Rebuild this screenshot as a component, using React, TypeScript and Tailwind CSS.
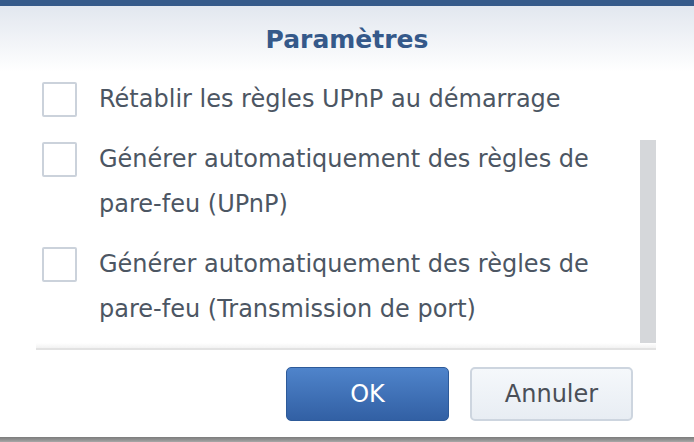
const items = [
  ["Rétablir les règles UPnP au démarrage"],
  ["Générer automatiquement des règles de", "pare-feu (UPnP)"],
  ["Générer automatiquement des règles de", "pare-feu (Transmission de port)"],
];

export default function App() {
  return (
    <div className="w-[694px] h-[442px] bg-white flex flex-col overflow-hidden font-['DejaVu_Sans',Verdana,sans-serif]">
      <div className="h-[6px] bg-[#365a8a]" />
      <div className="h-[66px] flex items-center justify-center bg-gradient-to-b from-[#e2e7ef] to-white">
        <h1 className="text-[25px] font-bold text-[#35598a] leading-none">Paramètres</h1>
      </div>

      <div className="h-[271px] flex pl-[36px] pr-[38px]">
        <div className="flex-1 flex flex-col gap-[15px] pt-[5px] pl-[6px]">
          {items.map((lines, i) => (
            <label key={i} className="flex items-start gap-[22px]">
              <span className="mt-[5px] w-[35px] h-[35px] shrink-0 border-2 border-[#cbd2db] rounded-[2px] bg-white" />
              <span className="text-[24px] leading-[45px] text-[#4c5663]">
                {lines.map((l, j) => (
                  <span key={j} className="block whitespace-nowrap">
                    {l}
                  </span>
                ))}
              </span>
            </label>
          ))}
        </div>
        <div className="w-[16px] pt-[68px]">
          <div className="h-full bg-[#d5d7da]" />
        </div>
      </div>

      <div className="mx-[36px] mr-[38px]">
        <div className="h-[5px] bg-gradient-to-b from-white to-[#f2f2f2]" />
        <div className="h-[2px] bg-[#e2e2e2]" />
      </div>

      <div className="flex-1 flex justify-end items-start gap-[21px] pt-[17px] pr-[61px]">
        <button className="w-[163px] h-[54px] rounded-[5px] border border-[#2d5a99] bg-gradient-to-b from-[#4f84cb] to-[#3260a4] text-white text-[24px]">
          OK
        </button>
        <button className="w-[163px] h-[54px] rounded-[5px] border-2 border-[#cdd5df] bg-gradient-to-b from-[#f5f8fb] to-[#e8edf3] text-[#4a4f57] text-[24px]">
          Annuler
        </button>
      </div>

      <div className="h-[5px] bg-gradient-to-b from-[#7c7c7c] via-[#8f8f8f] to-[#a8a8a8]" />
    </div>
  );
}
